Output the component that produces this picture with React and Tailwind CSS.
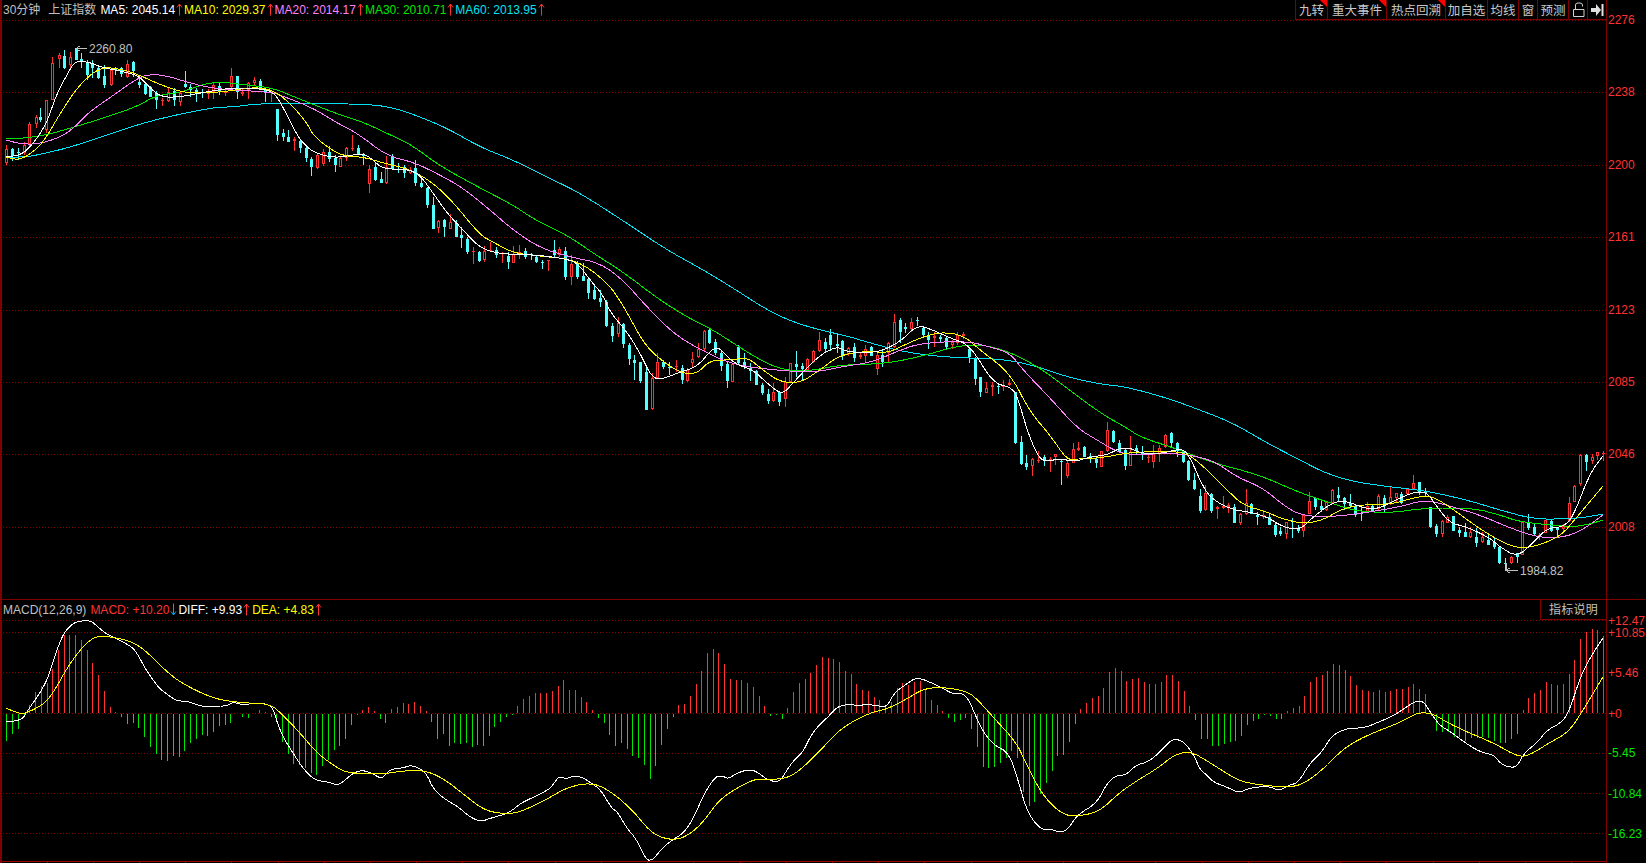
import React from "react";

const FONT = "font-['Liberation_Sans','Noto_Sans_CJK_SC',sans-serif]";

const MA5 =
  "6,157 21,155 32,145 46,125 57,93 68,73 75,61 89,62 100,67 125,72 139,76 150,88 161,97 180,97 200,93 230,88 253,88 273,91 283,107 297,135 303,143 313,152 330,157 343,157 363,153 373,160 383,169 407,169 420,175 433,193 447,213 463,230 480,248 500,254 537,255 560,258 577,262 590,280 603,295 610,312 627,332 640,353 652,378 663,379 680,372 697,367 713,348 720,348 733,363 753,370 767,383 782,395 793,383 817,357 837,346 847,352 877,353 900,342 917,325 933,330 950,338 970,345 993,383 1010,387 1017,395 1027,430 1038,457 1047,462 1060,458 1073,462 1090,457 1107,455 1120,448 1130,448 1140,453 1160,454 1182,448 1190,457 1203,487 1213,500 1233,510 1250,512 1267,517 1283,527 1300,530 1313,517 1333,502 1347,501 1363,508 1377,509 1390,503 1413,492 1427,492 1437,507 1450,523 1467,527 1490,538 1500,547 1517,557 1533,543 1547,528 1563,527 1573,517 1590,473 1603,456";
const MA10 =
  "6,157 18,160 29,155 43,143 61,112 79,85 100,67 121,69 139,75 161,85 182,92 197,93 223,92 253,87 273,90 290,103 307,123 313,135 327,147 343,156 363,157 380,162 400,167 413,171 433,183 453,202 480,235 493,242 513,253 540,256 577,260 607,282 623,305 643,342 657,357 680,373 697,374 710,360 733,360 747,357 763,370 780,382 800,383 820,370 840,355 867,351 887,353 900,347 920,338 940,332 963,335 980,350 1010,373 1030,412 1050,435 1067,460 1077,459 1100,458 1127,453 1140,452 1183,451 1200,463 1227,490 1243,505 1267,512 1280,518 1303,524 1323,520 1340,510 1357,505 1393,504 1413,498 1430,495 1450,507 1477,527 1500,541 1517,548 1533,547 1560,537 1577,517 1603,486";
const MA20 =
  "6,140 21,144 39,144 61,137 75,127 89,112 111,97 139,77 154,74 171,77 180,80 213,89 270,92 280,95 313,108 337,123 357,133 387,156 413,162 440,175 463,188 490,210 513,230 540,248 570,257 600,263 623,280 647,307 673,333 697,348 733,365 783,371 817,372 840,367 873,362 900,350 922,343 967,341 990,347 1010,353 1023,370 1050,398 1077,428 1097,440 1117,452 1133,455 1173,453 1200,457 1217,463 1237,477 1263,488 1283,505 1300,515 1323,517 1350,515 1400,507 1423,500 1443,504 1480,515 1510,528 1540,538 1567,537 1587,527 1603,515";
const MA30 =
  "6,139 25,138 46,135 71,128 107,117 138,106 157,95 180,93 212,81 247,85 273,88 297,98 340,115 363,122 397,138 413,146 440,166 480,188 513,205 535,220 567,235 593,253 623,272 657,298 687,317 713,330 733,343 760,360 783,370 810,371 840,365 877,364 900,361 930,354 953,347 980,344 1010,352 1040,368 1063,385 1100,413 1127,428 1140,437 1180,450 1210,462 1260,475 1300,493 1343,507 1357,511 1390,513 1425,508 1473,508 1500,515 1517,521 1540,524 1573,527 1590,524 1603,520";
const MA60 =
  "6,157 27,157 46,153 71,147 107,135 143,123 180,114 217,107 233,107 263,103 370,104 393,108 410,113 447,128 480,147 513,160 547,177 580,193 622,220 667,250 700,268 733,288 767,310 793,322 820,330 847,336 867,342 900,351 933,356 967,358 1000,359 1033,365 1067,377 1100,384 1127,387 1167,398 1200,410 1233,423 1267,443 1300,460 1323,472 1350,481 1383,486 1427,491 1467,500 1500,510 1533,519 1567,519 1587,517 1603,514";
const DIFF =
  "6,722 22,720 28,710 40,693 47,680 52,665 58,647 63,635 68,628 75,622 90,620 98,627 105,633 115,638 125,643 133,648 138,655 145,668 153,680 160,689 168,695 177,701 187,701 203,707 217,706 227,706 233,702 243,705 255,703 267,704 273,708 277,722 283,737 293,753 302,767 312,778 320,781 328,782 337,785 343,782 353,773 363,770 373,774 382,779 388,771 397,768 403,768 411,765 423,770 428,777 433,788 443,798 460,808 467,815 480,822 491,818 509,813 521,803 534,797 548,790 553,785 559,776 566,779 573,776 582,777 591,783 601,790 612,809 617,811 626,827 637,840 646,860 653,860 659,852 669,842 684,833 694,817 705,792 716,776 723,776 728,779 737,773 750,769 759,773 766,779 779,783 787,770 794,760 803,752 810,737 819,725 828,717 837,707 848,704 859,706 866,704 878,706 887,707 894,693 905,685 917,677 932,683 944,689 953,694 962,693 969,700 976,717 984,733 994,745 1009,753 1018,780 1026,808 1034,822 1043,830 1051,829 1061,833 1069,828 1077,815 1097,803 1107,783 1117,775 1126,775 1136,765 1148,762 1160,752 1170,741 1176,739 1184,742 1194,755 1200,770 1207,775 1213,782 1229,788 1239,793 1249,788 1269,786 1279,791 1289,785 1298,783 1310,763 1322,752 1332,735 1348,728 1364,728 1379,722 1395,715 1415,701 1423,701 1429,710 1439,725 1451,732 1464,742 1480,752 1494,755 1500,763 1508,767 1517,767 1524,753 1538,742 1547,730 1561,723 1569,712 1581,675 1593,653 1603,638";
const DEA =
  "6,708 15,712 23,714 33,710 45,703 55,690 67,668 80,650 90,640 98,636 113,637 133,642 147,652 167,672 183,684 210,697 227,701 247,703 270,704 283,715 300,733 317,753 333,765 347,773 367,773 382,774 403,771 423,770 443,778 467,797 480,807 491,812 509,814 523,811 551,797 564,789 585,783 603,786 630,807 651,833 669,840 684,838 701,825 719,800 737,788 755,779 766,779 784,779 798,772 819,752 837,732 855,720 873,712 887,709 905,700 923,689 941,687 966,691 976,698 994,718 1016,742 1026,763 1041,793 1059,812 1073,817 1099,812 1119,793 1138,780 1158,768 1174,755 1190,751 1209,762 1237,780 1253,784 1281,787 1300,786 1320,772 1340,752 1354,742 1375,732 1399,723 1425,709 1455,727 1494,743 1518,757 1530,755 1549,743 1569,732 1585,707 1603,677";

// x, body top, body bottom, high, low, r = hollow red, c = solid cyan
const CANDLES = [
  [6,149,163,145,165,"r"],[12,149,156,148,161,"c"],[18,152,153,148,160,"c"],[24,145,153,142,155,"r"],[29,124,144,122,146,"r"],[36,117,124,115,128,"r"],[40,117,120,108,122,"c"],[46,100,130,100,133,"r"],[52,63,100,57,100,"r"],[59,55,59,53,68,"r"],[64,56,68,50,69,"c"],[70,57,65,52,70,"r"],[76,48,60,48,60,"c"],[81,59,62,53,68,"c"],[87,63,75,60,80,"c"],
  [92,63,68,60,78,"c"],[98,68,78,65,79,"c"],[104,76,85,65,88,"c"],[111,70,85,68,86,"r"],[115,68,70,67,75,"c"],[121,68,74,67,77,"c"],[127,64,77,60,78,"r"],[133,62,71,61,77,"c"],[139,82,85,75,88,"c"],[145,84,94,83,95,"c"],[150,87,97,86,97,"c"],[156,93,100,91,109,"c"],[162,100,101,98,106,"r"],[168,92,101,88,102,"r"],[174,91,100,88,106,"c"],
  [180,93,102,91,106,"r"],[185,84,87,71,88,"c"],[190,87,90,84,97,"c"],[196,90,93,88,102,"c"],[202,92,93,89,98,"c"],[208,93,94,89,99,"r"],[213,85,92,83,99,"r"],[219,86,92,83,95,"c"],[225,92,93,90,96,"r"],[231,76,87,68,88,"r"],[237,76,92,76,99,"c"],[242,92,94,88,96,"r"],[248,83,90,82,99,"r"],[254,80,83,77,85,"r"],[260,81,88,79,89,"c"],[265,89,93,87,102,"c"],[271,92,92,90,102,"r"],
  [277,109,135,109,141,"c"],[283,133,137,129,141,"c"],[288,137,142,130,142,"c"],[294,139,141,137,151,"r"],[300,141,148,140,153,"c"],[306,148,158,147,162,"c"],[311,159,167,157,176,"c"],[317,155,168,154,169,"r"],[323,152,164,149,166,"r"],[329,152,159,146,162,"c"],[335,158,165,155,172,"c"],[340,158,167,156,167,"r"],[346,148,158,147,161,"r"],[352,148,149,135,151,"r"],[358,148,154,145,155,"c"],[363,154,156,153,165,"c"],[369,169,184,165,193,"r"],[375,167,180,163,181,"c"],[381,179,183,172,183,"c"],[386,167,183,156,184,"r"],[392,157,169,154,170,"c"],[398,166,167,163,173,"c"],[404,167,173,165,178,"c"],[410,170,173,167,174,"r"],[415,168,183,160,186,"c"],[421,183,187,177,188,"c"],[427,188,205,187,208,"c"],[433,205,229,197,229,"c"],[438,221,228,220,233,"r"],[444,220,227,219,237,"c"],[450,222,229,214,229,"r"],[456,223,237,220,237,"c"],[461,235,238,227,248,"c"],[467,239,252,237,254,"c"],[473,251,252,247,264,"r"],[479,252,261,251,262,"c"],[484,251,260,246,262,"r"],[490,250,251,242,252,"r"],[496,250,255,247,258,"c"],[502,253,253,252,263,"r"],[508,256,262,252,269,"c"],[513,254,263,246,263,"r"],[519,252,254,245,259,"r"],[525,251,257,248,259,"c"],[531,254,255,253,260,"c"],[536,257,262,255,263,"c"],[542,262,262,260,269,"c"],[548,260,261,260,271,"r"],[554,250,255,240,257,"c"],[559,249,255,247,257,"r"],[565,251,277,247,280,"c"],[571,264,277,255,285,"r"],[577,264,277,261,279,"c"],
  [583,276,281,263,281,"c"],[588,279,293,278,299,"c"],[594,290,299,285,300,"c"],[600,298,302,290,307,"c"],[606,302,326,300,327,"c"],[612,326,336,323,342,"c"],[618,323,334,317,337,"r"],[623,324,344,323,348,"c"],[629,345,359,343,365,"c"],[634,360,363,355,380,"c"],[640,362,381,362,383,"c"],[646,372,410,365,410,"c"],[652,378,409,373,410,"r"],[657,362,378,353,378,"r"],[663,362,367,360,369,"c"],[669,367,367,362,375,"c"],[676,366,367,360,372,"r"],[682,368,380,365,384,"c"],[687,370,381,368,382,"r"],[692,359,363,352,367,"r"],[698,349,357,343,358,"r"],[704,331,349,330,351,"r"],[709,330,343,328,344,"c"],[715,342,353,339,355,"c"],[721,353,366,350,371,"c"],[727,364,381,362,388,"c"],[732,364,382,363,382,"r"],[738,347,363,345,364,"c"],[744,362,367,353,369,"c"],[750,368,371,363,381,"c"],[756,371,385,370,385,"c"],[762,385,393,383,395,"c"],[768,394,401,389,404,"c"],[773,392,401,383,402,"r"],[779,392,402,391,406,"c"],[785,382,399,377,407,"r"],[790,363,382,363,382,"r"],[796,364,367,351,377,"c"],[802,366,369,363,380,"c"],[807,359,370,358,371,"r"],[813,351,362,350,363,"r"],[819,340,351,332,352,"r"],[825,342,349,338,353,"c"],[830,335,345,329,351,"c"],[837,344,346,333,353,"c"],[842,341,356,340,360,"c"],[848,348,354,347,356,"r"],[854,347,358,343,362,"c"],[860,355,357,352,359,"r"],[865,349,356,345,362,"r"],[871,347,356,346,356,"c"],[877,355,369,352,375,"r"],[882,355,362,350,367,"c"],[888,343,353,342,363,"r"],[894,322,347,314,348,"r"],
  [900,320,332,318,343,"c"],[905,327,329,323,333,"c"],[911,322,329,318,332,"r"],[917,320,321,317,326,"c"],[923,328,335,327,337,"c"],[928,336,340,332,349,"c"],[934,336,338,332,347,"r"],[940,337,339,335,342,"c"],[946,338,347,337,349,"c"],[952,342,345,340,349,"r"],[957,335,343,332,345,"r"],[963,334,336,332,339,"r"],[969,349,357,348,363,"c"],[975,358,379,357,385,"c"],[980,377,392,377,397,"c"],[986,388,393,382,393,"r"],[992,385,387,382,396,"r"],[998,386,387,385,394,"c"],[1003,386,386,380,391,"r"],[1009,383,385,379,386,"r"],[1015,392,443,392,444,"c"],[1021,442,464,436,465,"c"],[1026,463,467,455,470,"c"],[1032,459,466,458,476,"r"],[1038,460,461,451,463,"r"],[1044,457,461,455,466,"c"],[1050,459,460,457,472,"r"],[1055,454,457,454,465,"r"],[1061,461,462,459,485,"c"],[1067,463,476,460,478,"r"],[1073,449,463,443,463,"r"],[1078,448,450,442,451,"r"],[1084,447,457,446,457,"c"],[1090,456,457,453,463,"c"],[1096,459,463,457,468,"c"],[1101,451,467,451,467,"r"],[1107,430,451,422,452,"r"],[1113,431,442,430,443,"c"],[1119,443,452,440,453,"c"],[1125,450,466,449,470,"c"],[1130,452,466,436,466,"r"],[1136,448,451,445,455,"c"],[1142,452,454,446,460,"c"],[1148,457,457,454,463,"r"],[1153,454,462,445,468,"r"],[1159,448,454,445,462,"r"],[1165,435,447,434,448,"r"],[1171,433,443,432,448,"c"],[1177,443,451,442,457,"c"],[1183,452,462,450,463,"c"],[1188,461,480,460,481,"c"],[1194,480,489,473,490,"c"],[1200,496,511,489,513,"c"],
  [1205,493,510,485,511,"r"],[1211,494,511,493,513,"c"],[1217,507,509,506,519,"r"],[1223,506,508,496,509,"r"],[1228,505,507,503,513,"r"],[1234,507,523,504,523,"c"],[1240,514,523,513,525,"r"],[1246,503,514,489,515,"r"],[1251,504,514,503,514,"c"],[1257,515,517,512,525,"c"],[1263,515,517,510,519,"r"],[1269,517,525,514,525,"c"],[1275,525,535,523,537,"c"],[1280,531,534,527,536,"c"],[1286,522,534,522,539,"r"],[1292,528,529,518,538,"c"],[1298,528,531,525,533,"c"],[1303,515,531,514,537,"r"],[1309,501,514,492,514,"r"],[1315,498,507,497,510,"c"],[1321,506,510,500,512,"c"],[1326,502,510,501,511,"r"],[1332,490,503,489,503,"r"],[1338,495,498,487,502,"c"],[1344,498,504,497,510,"c"],[1350,503,506,494,508,"c"],[1355,506,515,505,517,"c"],[1361,513,514,507,521,"c"],[1367,506,512,502,512,"r"],[1372,506,511,504,512,"c"],[1378,496,509,494,510,"r"],[1384,498,504,495,512,"c"],[1390,497,503,486,505,"r"],[1396,493,498,493,503,"r"],[1401,494,503,492,504,"c"],[1407,489,494,488,495,"r"],[1413,483,489,475,489,"r"],[1419,482,493,482,495,"c"],[1425,491,493,488,497,"c"],[1430,507,527,507,528,"c"],[1436,526,534,524,537,"c"],[1442,521,534,520,537,"r"],[1447,517,523,515,523,"r"],[1453,516,531,516,531,"c"],[1459,530,533,527,537,"c"],[1465,532,537,523,537,"c"],[1470,532,537,527,538,"r"],[1476,537,543,528,547,"c"],[1482,537,542,532,543,"r"],[1488,540,545,533,545,"c"],[1494,542,547,537,549,"c"],[1499,547,563,546,564,"c"],
  [1505,563,564,558,571,"c"],[1511,557,563,556,564,"r"],[1517,553,557,553,563,"c"],[1522,522,555,522,555,"r"],[1528,523,528,514,530,"c"],[1534,527,534,524,535,"c"],[1539,535,537,533,540,"r"],[1545,520,533,520,533,"r"],[1551,521,531,519,532,"c"],[1557,528,530,527,536,"c"],[1563,525,529,524,532,"r"],[1569,503,521,497,522,"r"],[1574,486,502,485,502,"r"],[1580,455,484,454,486,"r"],[1586,455,462,454,471,"c"],[1592,457,461,454,464,"r"],[1597,452,456,452,460,"r"],[1603,453,454,451,461,"r"],
];

// histogram height per bar, positive is red and goes up from the zero line
const HIST = [
  -27,-20,-15,-3,8,21,27,30,44,63,78,78,78,73,63,50,38,22,6,1,-3,-10,-9,-14,-23,-33,-40,-46,-47,-42,-43,-37,-29,-25,-21,-22,-18,-12,-11,-9,0,-3,-4,0,3,1,-3,-4,-28,-40,-50,-51,-54,-59,-61,-52,-46,-36,-32,-25,-11,-1,3,6,2,-5,-9,4,6,10,9,11,7,2,-8,-25,-20,-32,-29,-30,-29,-33,-31,-32,
  -22,-13,-8,-3,-1,7,14,17,20,20,20,22,27,33,23,23,16,11,3,-4,-9,-21,-32,-29,-35,-42,-44,-51,-65,-52,-31,-15,-3,8,9,17,29,42,60,64,60,49,34,33,33,30,26,17,7,-2,-1,-5,5,21,30,34,40,48,56,55,54,51,42,39,29,23,22,16,13,7,11,25,30,28,31,32,23,13,8,2,-4,-8,-6,-4,-15,-33,-53,-54,-53,-49,-44,-37,-44,-78,-92,-88,-80,
  -69,-57,-42,-41,-28,-10,4,10,15,17,25,41,45,42,32,34,35,31,29,29,31,38,38,32,22,7,-6,-25,-25,-32,-32,-30,-28,-27,-22,-11,-7,-5,-1,-2,-5,-5,2,5,7,17,31,36,38,42,49,48,43,37,28,23,22,21,23,21,22,24,24,26,29,24,19,-2,-17,-18,-18,-23,-23,-27,-24,-24,-23,-24,-27,-29,-29,-25,-20,3,15,20,23,31,29,28,29,39,53,74,81,84,83,77,
];

const MAIN_GRID = [20, 92, 165, 237, 310, 382, 454, 527];
const MAIN_LABELS = ["2276", "2238", "2200", "2161", "2123", "2085", "2046", "2008"];
const MACD_GRID = [620, 632, 672, 713, 753, 793, 833];

const BUTTONS = [
  { text: "九转", width: "w-[32px]", flag: true },
  { text: "重大事件", width: "w-[59px]", flag: true },
  { text: "热点回溯", width: "w-[59px]", flag: true },
  { text: "加自选", width: "w-[42px]" },
  { text: "均线", width: "w-[31px]" },
  { text: "窗", width: "w-[19px]" },
  { text: "预测", width: "w-[31px]" },
];

const MA_ITEMS = [
  { label: "MA5: 2045.14", color: "text-white" },
  { label: "MA10: 2029.37", color: "text-[#ffff00]" },
  { label: "MA20: 2014.17", color: "text-[#ff80ff]" },
  { label: "MA30: 2010.71", color: "text-[#00e600]" },
  { label: "MA60: 2013.95", color: "text-[#02e2f4]" },
];

// rounds the corners of the traced lines a bit so they don't look like straight segments
function smooth(points) {
  let pts = points.split(" ").map((p) => p.split(",").map(Number));
  for (let n = 0; n < 2; n++) {
    const next = [pts[0]];
    for (let i = 0; i < pts.length - 1; i++) {
      const [ax, ay] = pts[i];
      const [bx, by] = pts[i + 1];
      next.push([ax * 0.75 + bx * 0.25, ay * 0.75 + by * 0.25]);
      next.push([ax * 0.25 + bx * 0.75, ay * 0.25 + by * 0.75]);
    }
    next.push(pts[pts.length - 1]);
    pts = next;
  }
  return pts.map((p) => p.join(",")).join(" ");
}

function Arrow({ up = true }) {
  const color = up ? "#ff3232" : "#02a8f4";
  return (
    <span className="inline-block w-[9px] align-[-2px]">
      <svg className="block" width="9" height="13" viewBox="0 0 9 13" style={{ transform: up ? "none" : "rotate(180deg)" }}>
        <path d="M4.5 1 V12.5 M4.5 1 L2 4.5 M4.5 1 L7 4.5" fill="none" stroke={color} strokeWidth="1" />
      </svg>
    </span>
  );
}

function Candle({ c }) {
  const [x, top, bot, hi, lo, kind] = c;
  const cx = Math.round(x);
  const color = kind === "r" ? "#ff3232" : "#54ffff";
  const h = Math.max(bot - top, 1);
  return (
    <g>
      <rect x={cx} y={hi} width={1} height={top - hi} fill={color} />
      <rect x={cx} y={top + h} width={1} height={Math.max(lo - top - h, 0)} fill={color} />
      {kind === "r" && h > 1 ? (
        <rect x={cx - 0.5} y={top + 0.5} width={2} height={h - 1} fill="#000" stroke={color} strokeWidth={1} />
      ) : (
        <rect x={cx - 1} y={top} width={3} height={h} fill={color} />
      )}
    </g>
  );
}

function Line({ points, color }) {
  return <polyline points={smooth(points)} fill="none" stroke={color} strokeWidth={1} />;
}

function Grid({ rows }) {
  return rows.map((y) => (
    <line key={y} x1={3} x2={1606} y1={y + 0.5} y2={y + 0.5} stroke="#8a0000" strokeDasharray="1 2" />
  ));
}

function ToolButton({ children, width, flag }) {
  return (
    <div className={`relative flex h-full items-center justify-center border-l border-[#800000] ${width}`}>
      {children}
      {flag && (
        <svg className="absolute right-0 top-0" width="7" height="7" viewBox="0 0 7 7">
          <polygon points="0,0 7,0 7,7" fill="#ff0000" />
        </svg>
      )}
    </div>
  );
}

function Toolbar() {
  return (
    <div className="absolute right-0 top-0 flex h-[20px] border-b border-[#800000] text-[12.5px] text-[#c8c8c8]">
      {BUTTONS.map((b) => (
        <ToolButton key={b.text} width={b.width} flag={b.flag}>
          <span className="mt-[3px]">{b.text}</span>
        </ToolButton>
      ))}
      <ToolButton width="w-[19px]">
        <svg width="13" height="15" viewBox="0 0 13 15">
          <path d="M1.5 7.5 V14.5 H12 V7.5 Z" fill="none" stroke="#d0d0d0" />
          <path d="M3.5 7 V3 Q3.5 1 6 1 H8 Q10.5 1 10.5 3 V4.5" fill="none" stroke="#d0d0d0" />
        </svg>
      </ToolButton>
      <ToolButton width="w-[19px]">
        <svg width="13" height="12" viewBox="0 0 13 12">
          <polygon points="0,4 5,4 5,0 10,6 5,12 5,8 0,8" fill="#e0e0e0" />
          <rect x="10.5" y="0" width="2" height="12" fill="#e0e0e0" />
        </svg>
      </ToolButton>
    </div>
  );
}

function MainPane() {
  return (
    <div className="flex h-[599px]">
      <div className="relative w-[1606px] shrink-0 border-l-2 border-[#800000]">
        <svg className="block" width="1604" height="599" viewBox="2 0 1604 599" shapeRendering="crispEdges">
          <Grid rows={MAIN_GRID} />
          {CANDLES.map((c) => (
            <Candle key={c[0]} c={c} />
          ))}
          <Line points={MA60} color="#02e2f4" />
          <Line points={MA30} color="#00e600" />
          <Line points={MA20} color="#ff80ff" />
          <Line points={MA10} color="#ffff00" />
          <Line points={MA5} color="#ffffff" />
          <path d="M76.5 48.5 H87 M76.5 48.5 L79.5 46 M76.5 48.5 L79.5 51" fill="none" stroke="#c0c0c0" />
          <path d="M1506.5 563 V570.5 H1518 M1506.5 570.5 L1509.5 568 M1506.5 570.5 L1509.5 573" fill="none" stroke="#c0c0c0" />
          <text x="89" y="53" fontSize="12" fill="#c0c0c0" shapeRendering="auto">2260.80</text>
          <text x="1520" y="574.5" fontSize="12" fill="#c0c0c0" shapeRendering="auto">1984.82</text>
        </svg>
        <div className="absolute left-[1px] top-[2px] flex h-[16px] items-center whitespace-nowrap text-[12px] leading-[16px]">
          <span className="text-[#c0c0c0]">30分钟</span>
          <span className="ml-[8px] text-[#c0c0c0]">上证指数</span>
          <div className="ml-[4px] flex">
            {MA_ITEMS.map((m) => (
              <span key={m.label} className={m.color}>
                {m.label}
                <Arrow />
              </span>
            ))}
          </div>
        </div>
        <Toolbar />
      </div>
      <div className="flex flex-1 flex-col gap-[58.4px] border-l border-[#800000] pl-[1px] pt-[13px] text-[12px] leading-[14px] text-[#ff3232]">
        {MAIN_LABELS.map((l) => (
          <span key={l} className="h-[14px]">{l}</span>
        ))}
      </div>
    </div>
  );
}

function MacdPane() {
  const step = (1603 - 6.3) / (HIST.length - 1);
  const ticks = [];
  for (let x = 46.5; x < 1606; x += 46.2) ticks.push(Math.round(x));

  return (
    <div className="flex flex-1 border-t border-[#800000]">
      <div className="relative w-[1606px] shrink-0 border-l-2 border-[#800000]">
        <svg className="block" width="1604" height="263" viewBox="2 600 1604 263" shapeRendering="crispEdges">
          <Grid rows={MACD_GRID} />
          {HIST.map((h, i) => {
            const x = Math.round(6.3 + i * step);
            if (h === 0) return null;
            return h > 0 ? (
              <rect key={i} x={x} y={713 - h} width={1} height={h} fill="#ff3232" />
            ) : (
              <rect key={i} x={x} y={714} width={1} height={-h} fill="#00e600" />
            );
          })}
          <Line points={DIFF} color="#ffffff" />
          <Line points={DEA} color="#ffff00" />
          <rect x={2} y={861} width={1604} height={1} fill="#a00000" />
          {ticks.map((x) => (
            <rect key={x} x={x} y={862} width={1} height={1} fill="#a00000" />
          ))}
        </svg>
        <div className="absolute left-[1px] top-[2px] flex h-[16px] items-center whitespace-nowrap text-[12px] leading-[16px]">
          <span className="text-[#c0c0c0]">MACD(12,26,9)</span>
          <span className="ml-[4px] text-[#ff3232]">MACD: +10.20<Arrow up={false} /></span>
          <span className="text-white">DIFF: +9.93<Arrow /></span>
          <span className="ml-[1px] text-[#ffff00]">DEA: +4.83<Arrow /></span>
        </div>
        <div className="absolute right-0 top-0 flex h-[20px] w-[66px] items-center justify-center border-b border-l border-[#800000] text-[12px] tracking-[0.3px] text-[#c0c0c0]">
          指标说明
        </div>
      </div>
      <div className="flex flex-1 flex-col border-l border-[#800000] pl-[1px] pt-[15px] text-[12px] leading-[12px] text-[#ff3232]">
        <span>+12.47</span>
        <span>+10.85</span>
        <span className="mt-[28px]">+5.46</span>
        <span className="mt-[29px]">+0</span>
        <span className="mt-[27px] text-[#00e600]">-5.45</span>
        <span className="mt-[29px] text-[#00e600]">-10.84</span>
        <span className="mt-[28px] text-[#00e600]">-16.23</span>
      </div>
    </div>
  );
}

export default function App() {
  return (
    <div className={`flex h-[863px] w-[1646px] flex-col overflow-hidden bg-black ${FONT}`}>
      <MainPane />
      <MacdPane />
    </div>
  );
}
